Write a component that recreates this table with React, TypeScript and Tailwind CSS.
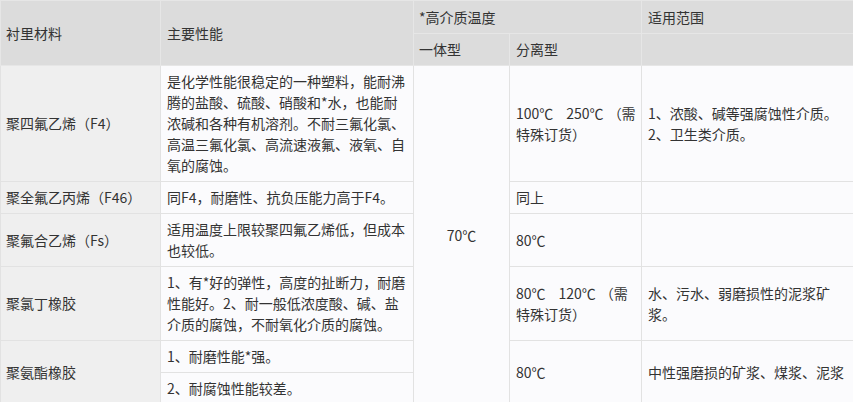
import React from 'react'

const th = 'border border-[#e6e6e6] bg-[#dcdcdc] px-[5px] py-[5px] text-left font-normal align-middle'
const tdName = 'border border-[#e2e2e2] bg-[#efefef] px-[5px] py-[5px] align-middle'
const td = 'border border-[#e2e2e2] bg-[#fbfbfd] px-[6px] py-[5px] align-middle'

export default function App() {
  return (
    <div
      className="w-[853px] h-[402px] overflow-hidden bg-white text-[#333] text-[14px] leading-[21px]"
      style={{ fontFamily: '"Noto Sans CJK SC", "Noto Sans", sans-serif' }}
    >
      <table className="w-[853px] table-fixed border-collapse">
        <colgroup>
          <col className="w-[160px]" />
          <col className="w-[253px]" />
          <col className="w-[96px]" />
          <col className="w-[132px]" />
          <col className="w-[212px]" />
        </colgroup>
        <thead>
          <tr className="h-[33px]">
            <th rowSpan={2} className={th}>衬里材料</th>
            <th rowSpan={2} className={th + ' px-[6px]'}>主要性能</th>
            <th colSpan={2} className={th}>*高介质温度</th>
            <th className={th + ' px-[6px]'}>适用范围</th>
          </tr>
          <tr className="h-[32px]">
            <th className={th}>一体型</th>
            <th className={th + ' px-[6px]'}>分离型</th>
            <th className={th}></th>
          </tr>
        </thead>
        <tbody>
          <tr>
            <td className={tdName}>聚四氟乙烯（F4）</td>
            <td className={td}>
              是化学性能很稳定的一种塑料，能耐沸<br />
              腾的盐酸、硫酸、硝酸和*水，也能耐<br />
              浓碱和各种有机溶剂。不耐三氟化氯、<br />
              高温三氟化氯、高流速液氟、液氧、自<br />
              氧的腐蚀。
            </td>
            <td rowSpan={6} className={td + ' text-center'}>70℃</td>
            <td className={td}>
              <span className="whitespace-nowrap">
                100℃<span className="ml-[13px]">250℃</span><span className="ml-[4px]">（需</span>
              </span>
              <br />
              特殊订货）
            </td>
            <td className={td}>
              1、浓酸、碱等强腐蚀性介质。<br />
              2、卫生类介质。
            </td>
          </tr>
          <tr>
            <td className={tdName}>聚全氟乙丙烯（F46）</td>
            <td className={td}>同F4，耐磨性、抗负压能力高于F4。</td>
            <td className={td}>同上</td>
            <td className={td}></td>
          </tr>
          <tr>
            <td className={tdName}>聚氟合乙烯（Fs）</td>
            <td className={td}>
              适用温度上限较聚四氟乙烯低，但成本<br />
              也较低。
            </td>
            <td className={td}>80℃</td>
            <td className={td}></td>
          </tr>
          <tr>
            <td className={tdName}>聚氯丁橡胶</td>
            <td className={td}>
              1、有*好的弹性，高度的扯断力，耐磨<br />
              性能好。2、耐一般低浓度酸、碱、盐<br />
              介质的腐蚀，不耐氧化介质的腐蚀。
            </td>
            <td className={td}>
              <span className="whitespace-nowrap">
                80℃<span className="ml-[13px]">120℃</span><span className="ml-[4px]">（需</span>
              </span>
              <br />
              特殊订货）
            </td>
            <td className={td}>
              水、污水、弱磨损性的泥浆矿<br />
              浆。
            </td>
          </tr>
          <tr>
            <td rowSpan={2} className={tdName}>聚氨酯橡胶</td>
            <td className={td}>1、耐磨性能*强。</td>
            <td rowSpan={2} className={td}>80℃</td>
            <td rowSpan={2} className={td + ' whitespace-nowrap'}>中性强磨损的矿浆、煤浆、泥浆</td>
          </tr>
          <tr>
            <td className={td}>2、耐腐蚀性能较差。</td>
          </tr>
        </tbody>
      </table>
    </div>
  )
}
